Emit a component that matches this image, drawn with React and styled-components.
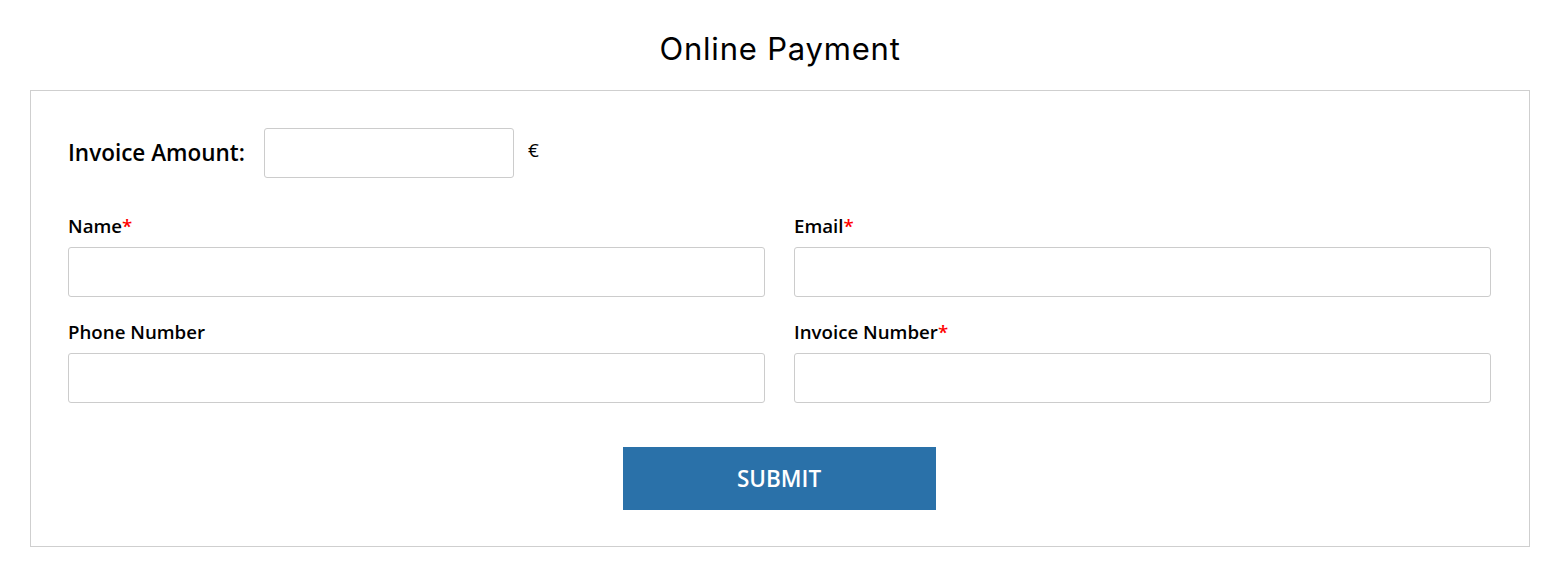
import React from "react";
import styled, { createGlobalStyle } from "styled-components";

const Global = createGlobalStyle`
  html, body { margin: 0; padding: 0; background: #fff; }
  body { font-family: "Open Sans", "Liberation Sans", sans-serif; color: #000; }
  * { box-sizing: border-box; }
`;

const Page = styled.div`
  width: 1563px;
  padding-left: 30px;
`;

const Title = styled.h1`
  margin: 0;
  width: 1500px;
  height: 90px;
  padding-top: 28px;
  text-align: center;
  font-family: "Inter", "Liberation Sans", sans-serif;
  font-weight: 400;
  font-size: 31px;
  line-height: 42px;
  letter-spacing: 0.8px;
  color: #000;
`;

const Card = styled.form`
  width: 1500px;
  border: 1px solid #cfcfcf;
  padding: 37px 37px 36px 37px;
  display: flex;
  flex-direction: column;
`;

const AmountRow = styled.div`
  display: flex;
  align-items: center;
  height: 50px;
`;

const AmountLabel = styled.label`
  font-size: 22.5px;
  font-weight: 600;
  margin-right: 19px;
  margin-bottom: 2px;
`;

const Currency = styled.span`
  font-size: 19px;
  margin-left: 14px;
  margin-bottom: 6px;
`;

const Input = styled.input`
  display: block;
  width: ${(p) => p.$w || "100%"};
  height: 50px;
  border: 1px solid #cccccc;
  border-radius: 3px;
  background: #fff;
  font-family: inherit;
  font-size: 16px;
  padding: 0 12px;
  outline: none;
`;

const Grid = styled.div`
  display: grid;
  grid-template-columns: 697px 697px;
  column-gap: 29px;
  row-gap: 23px;
  margin-top: 36px;
`;

const Field = styled.div`
  display: flex;
  flex-direction: column;
`;

const FieldLabel = styled.label`
  font-size: 18.7px;
  font-weight: 600;
  line-height: 24px;
  margin-bottom: 9px;
`;

const Req = styled.span`
  color: #ff0000;
`;

const Actions = styled.div`
  display: flex;
  justify-content: center;
  margin-top: 44px;
  padding-right: 2px;
`;

const Submit = styled.button`
  width: 313px;
  height: 63px;
  border: none;
  background: #2a71a9;
  color: #fff;
  font-family: "Open Sans", sans-serif;
  font-weight: 600;
  font-size: 22.5px;
  text-transform: uppercase;
  cursor: pointer;
`;

const fields = [
  { label: "Name", req: true },
  { label: "Email", req: true },
  { label: "Phone Number", req: false },
  { label: "Invoice Number", req: true },
];

export default function App() {
  return (
    <Page>
      <Global />
      <Title>Online Payment</Title>
      <Card onSubmit={(e) => e.preventDefault()}>
        <AmountRow>
          <AmountLabel>Invoice Amount:</AmountLabel>
          <Input $w="250px" type="text" />
          <Currency>€</Currency>
        </AmountRow>
        <Grid>
          {fields.map((f) => (
            <Field key={f.label}>
              <FieldLabel>
                {f.label}
                {f.req && <Req>*</Req>}
              </FieldLabel>
              <Input type="text" />
            </Field>
          ))}
        </Grid>
        <Actions>
          <Submit type="submit">Submit</Submit>
        </Actions>
      </Card>
    </Page>
  );
}
